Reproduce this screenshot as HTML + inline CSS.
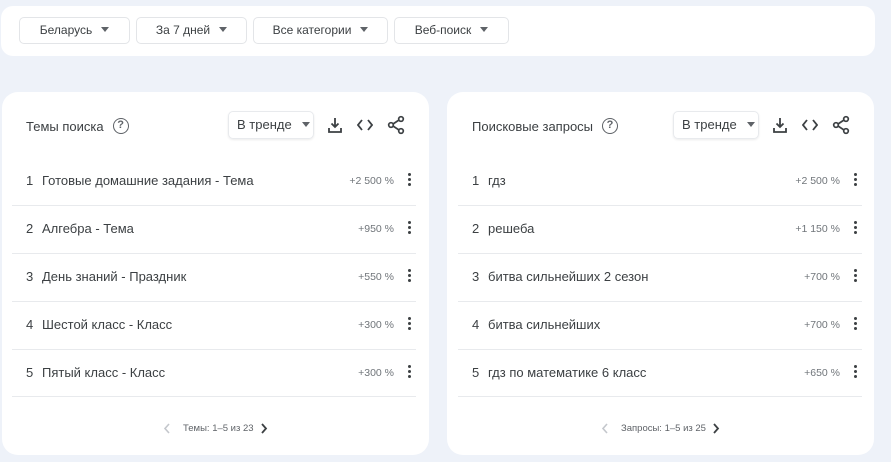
<!DOCTYPE html>
<html><head><meta charset="utf-8"><style>
*{box-sizing:border-box;margin:0;padding:0}
body{width:891px;height:462px;overflow:hidden;background:#eef2f9;font-family:"Liberation Sans","Noto Sans CJK SC",sans-serif;color:#202124;position:relative}
.top{position:absolute;left:1px;top:6px;width:874px;height:50px;background:#fff;border-radius:12px}
.dd{position:absolute;top:17px;height:27px;border:1px solid #e3e5e8;border-radius:5px;font-size:12px;line-height:25px;color:#3c4043;text-align:center}
.tri{display:inline-block;width:0;height:0;border-left:4px solid transparent;border-right:4px solid transparent;border-top:5px solid #5f6368;margin-left:9px;vertical-align:2px}
.card{position:absolute;top:92px;height:363px;background:#fff;border-radius:16px}
.title{position:absolute;top:118px;font-size:13px;color:#3c4043;display:flex;align-items:center}
.q{display:inline-block;width:16px;height:16px;border:1.5px solid #5f6368;border-radius:50%;font-size:11px;line-height:13px;text-align:center;color:#5f6368;font-weight:bold;margin-left:9px}
.sel{position:absolute;top:111px;width:86px;height:28px;border:1px solid #e8eaed;border-radius:5px;font-size:13px;line-height:26px;padding-left:8px;color:#3c4043;box-shadow:0 1px 2px rgba(0,0,0,.08)}
.row{position:absolute;height:48px;font-size:13px;color:#3c4043}
.row .n{position:absolute;left:14px;top:16px}
.row .t{position:absolute;left:30px;top:16px}
.row .p{position:absolute;top:18px;font-size:10.5px;color:#70757a;text-align:right;width:70px}
.row .m{position:absolute;top:16px;width:3px}
.row .m i{display:block;width:3px;height:3px;background:#3c4043;border-radius:50%;margin-bottom:2px}
.line{position:absolute;height:1px;background:#e8eaed}
.pg{position:absolute;top:423px;font-size:9.5px;color:#5f6368}
svg{position:absolute}
</style></head><body>
<div class="top"></div>
<div class="dd" style="left:19px;width:111px">Беларусь<span class="tri"></span></div>
<div class="dd" style="left:136px;width:111px">За 7 дней<span class="tri"></span></div>
<div class="dd" style="left:253px;width:135px">Все категории<span class="tri"></span></div>
<div class="dd" style="left:394px;width:115px">Веб-поиск<span class="tri"></span></div>

<div class="card" style="left:2px;width:427px"></div>
<div class="card" style="left:447px;width:427px"></div>

<div class="title" style="left:26px">Темы поиска<span class="q">?</span></div>
<div class="sel" style="left:228px">В тренде<span class="tri" style="margin-left:10px"></span></div>

<div class="title" style="left:472px">Поисковые запросы<span class="q">?</span></div>
<div class="sel" style="left:673px">В тренде<span class="tri" style="margin-left:10px"></span></div>

<svg style="left:327px;top:116px" width="16" height="18" viewBox="0 0 16 18" fill="none" stroke="#3c4043" stroke-width="1.8"><path d="M8 2v9M4.5 7.5L8 11l3.5-3.5M2 12v4h12v-4"/></svg>
<svg style="left:357px;top:119px" width="16" height="12" viewBox="0 0 16 12" fill="none" stroke="#3c4043" stroke-width="1.8"><path d="M5 1L1 6l4 5M11 1l4 5-4 5"/></svg>
<svg style="left:387px;top:115px" width="18" height="20" viewBox="0 0 18 20" fill="none" stroke="#3c4043" stroke-width="1.7"><circle cx="14" cy="4" r="2.3"/><circle cx="4" cy="10" r="2.3"/><circle cx="14" cy="16" r="2.3"/><path d="M6 9l6-4M6 11l6 4"/></svg>
<svg style="left:772px;top:116px" width="16" height="18" viewBox="0 0 16 18" fill="none" stroke="#3c4043" stroke-width="1.8"><path d="M8 2v9M4.5 7.5L8 11l3.5-3.5M2 12v4h12v-4"/></svg>
<svg style="left:802px;top:119px" width="16" height="12" viewBox="0 0 16 12" fill="none" stroke="#3c4043" stroke-width="1.8"><path d="M5 1L1 6l4 5M11 1l4 5-4 5"/></svg>
<svg style="left:832px;top:115px" width="18" height="20" viewBox="0 0 18 20" fill="none" stroke="#3c4043" stroke-width="1.7"><circle cx="14" cy="4" r="2.3"/><circle cx="4" cy="10" r="2.3"/><circle cx="14" cy="16" r="2.3"/><path d="M6 9l6-4M6 11l6 4"/></svg>

<div class="row" style="left:12px;top:157px;width:404px"><span class="n">1</span><span class="t">Готовые домашние задания - Тема</span><span class="p" style="left:312px">+2 500 %</span><span class="m" style="left:396px"><i></i><i></i><i></i></span></div>
<div class="row" style="left:12px;top:205px;width:404px"><span class="n">2</span><span class="t">Алгебра - Тема</span><span class="p" style="left:312px">+950 %</span><span class="m" style="left:396px"><i></i><i></i><i></i></span></div>
<div class="row" style="left:12px;top:253px;width:404px"><span class="n">3</span><span class="t">День знаний - Праздник</span><span class="p" style="left:312px">+550 %</span><span class="m" style="left:396px"><i></i><i></i><i></i></span></div>
<div class="row" style="left:12px;top:301px;width:404px"><span class="n">4</span><span class="t">Шестой класс - Класс</span><span class="p" style="left:312px">+300 %</span><span class="m" style="left:396px"><i></i><i></i><i></i></span></div>
<div class="row" style="left:12px;top:349px;width:404px"><span class="n">5</span><span class="t">Пятый класс - Класс</span><span class="p" style="left:312px">+300 %</span><span class="m" style="left:396px"><i></i><i></i><i></i></span></div>
<div class="line" style="left:12px;top:205px;width:404px"></div>
<div class="line" style="left:12px;top:253px;width:404px"></div>
<div class="line" style="left:12px;top:301px;width:404px"></div>
<div class="line" style="left:12px;top:349px;width:404px"></div>
<div class="line" style="left:12px;top:396px;width:404px"></div>

<div class="row" style="left:458px;top:157px;width:404px"><span class="n">1</span><span class="t">гдз</span><span class="p" style="left:312px">+2 500 %</span><span class="m" style="left:396px"><i></i><i></i><i></i></span></div>
<div class="row" style="left:458px;top:205px;width:404px"><span class="n">2</span><span class="t">решеба</span><span class="p" style="left:312px">+1 150 %</span><span class="m" style="left:396px"><i></i><i></i><i></i></span></div>
<div class="row" style="left:458px;top:253px;width:404px"><span class="n">3</span><span class="t">битва сильнейших 2 сезон</span><span class="p" style="left:312px">+700 %</span><span class="m" style="left:396px"><i></i><i></i><i></i></span></div>
<div class="row" style="left:458px;top:301px;width:404px"><span class="n">4</span><span class="t">битва сильнейших</span><span class="p" style="left:312px">+700 %</span><span class="m" style="left:396px"><i></i><i></i><i></i></span></div>
<div class="row" style="left:458px;top:349px;width:404px"><span class="n">5</span><span class="t">гдз по математике 6 класс</span><span class="p" style="left:312px">+650 %</span><span class="m" style="left:396px"><i></i><i></i><i></i></span></div>
<div class="line" style="left:458px;top:205px;width:404px"></div>
<div class="line" style="left:458px;top:253px;width:404px"></div>
<div class="line" style="left:458px;top:301px;width:404px"></div>
<div class="line" style="left:458px;top:349px;width:404px"></div>
<div class="line" style="left:458px;top:396px;width:404px"></div>

<svg style="left:163px;top:423px" width="8" height="11" viewBox="0 0 8 11" fill="none" stroke="#c4c7cc" stroke-width="1.6"><path d="M6 1L2 5.5 6 10"/></svg>
<div class="pg" style="left:183px">Темы: 1–5 из 23</div>
<svg style="left:260px;top:423px" width="8" height="11" viewBox="0 0 8 11" fill="none" stroke="#3c4043" stroke-width="1.8"><path d="M2 1l4 4.5L2 10"/></svg>
<svg style="left:601px;top:423px" width="8" height="11" viewBox="0 0 8 11" fill="none" stroke="#c4c7cc" stroke-width="1.6"><path d="M6 1L2 5.5 6 10"/></svg>
<div class="pg" style="left:621px">Запросы: 1–5 из 25</div>
<svg style="left:712px;top:423px" width="8" height="11" viewBox="0 0 8 11" fill="none" stroke="#3c4043" stroke-width="1.8"><path d="M2 1l4 4.5L2 10"/></svg>
</body></html>
